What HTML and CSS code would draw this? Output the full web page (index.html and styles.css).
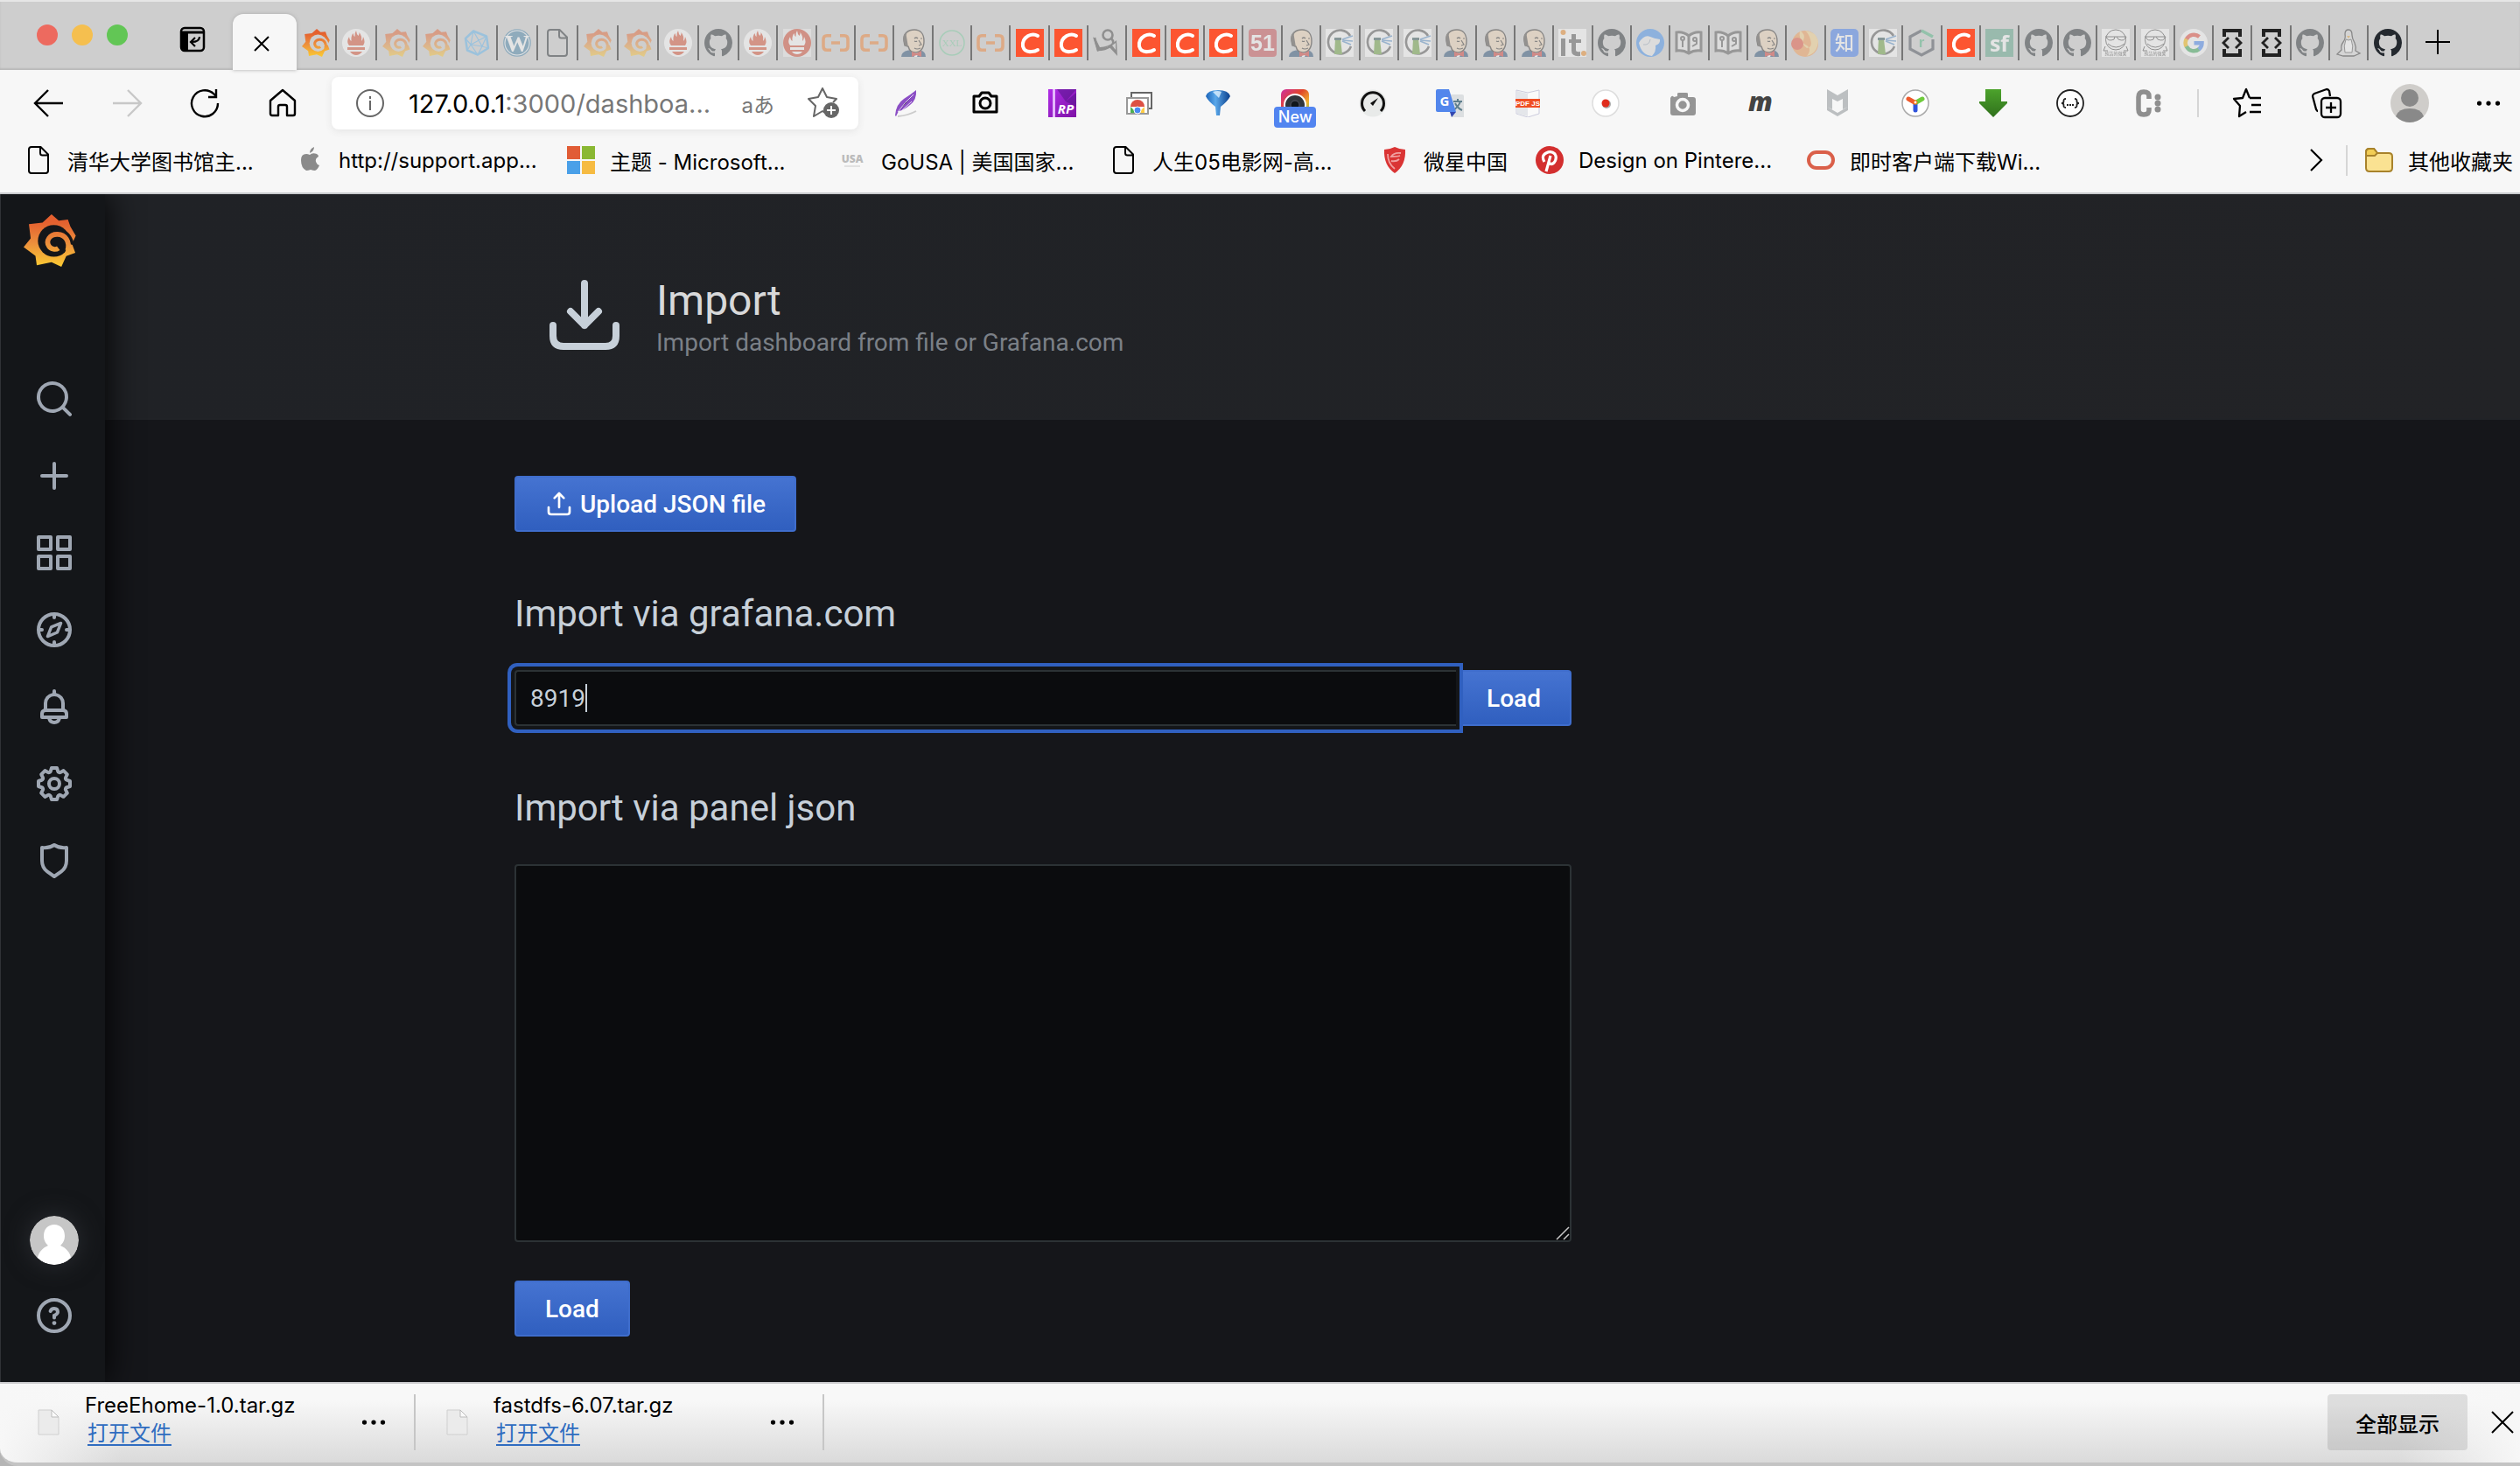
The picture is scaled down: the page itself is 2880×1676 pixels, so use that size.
FILE: index.html
```html
<!DOCTYPE html>
<html lang="zh-CN">
<head>
<meta charset="utf-8">
<title>Import - Grafana</title>
<link rel="stylesheet" href="styles.css">
</head>
<body>
<svg class="defs" aria-hidden="true">
<defs>
<linearGradient id="sun" x1="0" y1="0" x2="0" y2="1"><stop offset=".15" stop-color="#e4602f"/><stop offset=".55" stop-color="#ec8f3c"/><stop offset="1" stop-color="#fbcb33"/></linearGradient>
<linearGradient id="rp" x1="0" y1="0" x2="1" y2="1"><stop offset="0" stop-color="#b02ce8"/><stop offset="1" stop-color="#7d12a5"/></linearGradient>
<linearGradient id="cam" x1="0" y1="0" x2="1" y2="1"><stop offset="0" stop-color="#cf2fa0"/><stop offset=".4" stop-color="#e0452b"/><stop offset=".7" stop-color="#f0b030"/><stop offset="1" stop-color="#52c96b"/></linearGradient>
<linearGradient id="blue" x1="0" y1="0" x2="1" y2="0"><stop offset="0" stop-color="#1a63b8"/><stop offset=".4" stop-color="#5aa8ea"/><stop offset="1" stop-color="#0a3f8d"/></linearGradient>
<linearGradient id="green" x1="0" y1="0" x2="0" y2="1"><stop offset="0" stop-color="#4ca32c"/><stop offset="1" stop-color="#30701c"/></linearGradient>
<mask id="swirl"><rect width="32" height="32" fill="#fff"/><circle cx="18.4" cy="16.2" r="9.7" fill="#000"/><path d="M24 9C28 11 30 14 31 19L27 20Z" fill="#000"/><path d="M26.8 22C28.4 16.5 25.4 12.4 20.7 12.2C15.8 12 13.4 16.2 15.4 19.4C16.8 21.5 19.6 21.8 21.2 20.6" fill="none" stroke="#fff" stroke-width="3"/><path d="M27 18L32 19V24H25Z" fill="#fff"/><path d="M25 6Q29 9 30 12L32 15L31 6L27 3Z" fill="#fff"/></mask>
<symbol id="grafana" viewBox="0 0 32 32"><path mask="url(#swirl)" fill="url(#sun)" d="M17 0L21.4 3.8L27 3.2L28.5 7.5L31.8 13L29.5 18L31.5 23.5L26 25.5L23 32L17 29.2L8 31L7.2 25.3L0 20L4.3 14.7L3.2 6L11.5 5Z" stroke-linejoin="round"/></symbol>
<symbol id="prom" viewBox="0 0 32 32"><circle cx="16" cy="16" r="16" fill="#fff"/><path fill="#da4e31" d="M8 19C5 15 6.500 12 8 9Q8.500 13 10.500 14Q10 8 12.500 5Q13 8 14.500 9Q14 5 16 2Q16.500 6 18.500 8Q20 6 19.500 4Q23 8 22 14Q24 12 24 9Q27 15 24 19ZM6 21H26V24H6ZM9 26H23Q20 30 16 30Q12 30 9 26Z"/></symbol>
<symbol id="promsq" viewBox="0 0 32 32"><path fill="#eee" d="M0 0H32V32H0Z"/><circle cx="16" cy="16" r="16" fill="#d4472e"/><path fill="#fff" d="M8 19C5 15 6.500 12 8 9Q8.500 13 10.500 14Q10 8 12.500 5Q13 8 14.500 9Q14 5 16 2Q16.500 6 18.500 8Q20 6 19.500 4Q23 8 22 14Q24 12 24 9Q27 15 24 19ZM8 21H24V24H8ZM10 26H22Q20 29 16 29Q12 29 10 26Z"/></symbol>
<symbol id="poly" viewBox="0 0 32 32"><g fill="none" stroke="#5fb4ef" stroke-linejoin="round"><path stroke-width="2.500" d="M12 2.500L27 8.500L29 22L17 29.500L5 24.500L3 11Z"/><path stroke-width="1.200" d="M12 2.500L9 18L27 8.500M9 18L22 20L27 8.500M22 20L29 22M22 20L17 29.500L9 18L5 24.500M9 18L3 11M12 2.500L22 20"/></g></symbol>
<symbol id="wp" viewBox="0 0 32 32"><circle cx="16" cy="16" r="15.200" fill="#fff" stroke="#4381a8" stroke-width="1.300"/><circle cx="16" cy="16" r="13.500" fill="#4381a8"/><text x="16" y="26" font-family="Liberation Serif, serif" font-weight="700" font-size="28" text-anchor="middle" fill="#fff">W</text></symbol>
<symbol id="page" viewBox="0 0 32 32"><path fill="none" stroke="currentColor" stroke-width="2" stroke-linejoin="round" d="M8 1H18.500L27 9.500V28Q27 31 24 31H8Q5 31 5 28V4Q5 1 8 1ZM18 1.500V8Q18 10.500 20.500 10.500H26.500"/></symbol>
<symbol id="github" viewBox="0 0 16 16"><path fill="currentColor" d="M8 0C3.580 0 0 3.580 0 8c0 3.540 2.290 6.530 5.470 7.590.4.070.55-.17.55-.38 0-.19-.01-.82-.01-1.490-2.010.37-2.530-.49-2.690-.94-.09-.23-.48-.94-.82-1.130-.28-.15-.68-.52-.01-.53.63-.01 1.080.58 1.230.82.72 1.210 1.870.87 2.330.66.07-.52.28-.87.51-1.070-1.780-.2-3.640-.89-3.640-3.950 0-.87.31-1.590.82-2.150-.08-.2-.36-1.020.08-2.120 0 0 .67-.21 2.200.82.64-.18 1.320-.27 2-.27s1.360.09 2 .27c1.530-1.040 2.200-.82 2.200-.82.44 1.100.16 1.920.08 2.120.51.56.82 1.270.82 2.150 0 3.070-1.870 3.750-3.650 3.950.29.25.54.73.54 1.480 0 1.070-.01 1.930-.01 2.200 0 .21.15.46.55.38A8.010 8.010 0 0 0 16 8c0-4.420-3.580-8-8-8z"/></symbol>
<symbol id="ali" viewBox="0 0 32 32"><path fill="none" stroke="#f08030" stroke-width="3.600" d="M11 7.800H6Q2 7.800 2 12V20Q2 24.200 6 24.200H11M21 7.800H26Q30 7.800 30 12V20Q30 24.200 26 24.200H21M11 16H21"/></symbol>
<symbol id="butler" viewBox="0 0 32 32"><path fill="#234a73" d="M2 32Q2 26 10 24.500L24 24.500Q30 26 30 32Z"/><path fill="#fff" d="M13 24L17 32H20L23 25Z"/><path d="M5 14C4 5 10 1 17 1C24 1 28 6 28 14C28 22 24 27 18 27C14 27 11 24 10 20L6 19Z" fill="#f0d6b7" stroke="#33302e" stroke-width="1.400"/><path fill="#4c4845" d="M5 15Q2 6 10 2Q7 6 8 9L9 15L10 21Q6 20 5 15Z"/><path d="M17 11Q19 9 21 11M24 11L26 11M17 14Q19 15 20 14M22 13L25 18L22 19M17 22Q20 24 24 22" fill="none" stroke="#33302e" stroke-width="1.200"/><path fill="#d33833" d="M14 26L19.500 28L25 25V32L19.500 30L14 32Z"/></symbol>
<symbol id="xxl" viewBox="0 0 32 32"><circle cx="16" cy="16" r="14" fill="none" stroke="#7ccba0" stroke-width="1.600"/><text x="16" y="20" font-family="Liberation Serif, serif" font-size="11" text-anchor="middle" fill="#7ccba0">XXL</text></symbol>
<symbol id="csdn" viewBox="0 0 32 32"><path fill="#fc5531" d="M0 0H32V32H0Z"/><path fill="none" stroke="#fff" stroke-width="4" stroke-linecap="round" d="M25 8Q20 5 14 8Q7 12 8 20Q10 27 18 26Q22 26 25 24"/></symbol>
<symbol id="dancer" viewBox="0 0 32 32"><g fill="none" stroke="#444" stroke-width="2.600"><circle cx="17" cy="7" r="5.500"/><path d="M21 11Q26 16 20 20Q14 24 6 24L2 10"/></g><path fill="#444" d="M0 9L5 15L8 21Q20 20 27 13L28 31L18 20L5 26Z"/><path fill="#cecece" d="M22 19L26 16V24Z"/></symbol>
<symbol id="fifty" viewBox="0 0 32 32"><rect width="32" height="32" rx="4" fill="#c94b50"/><text x="16" y="25" font-family="Liberation Sans, sans-serif" font-weight="700" font-size="25" text-anchor="middle" fill="#fff">51</text></symbol>
<symbol id="light" viewBox="0 0 32 32"><path fill="#fff" d="M0 0H32V32H0Z"/><path fill="none" stroke="#555" stroke-width="2.600" d="M28 8A13.500 13.500 0 1 0 29 20"/><path fill="#6aa03c" d="M11 12H17L19 29H10Z"/><path fill="#355" d="M10 10H18V13H10Z"/><path stroke="#5b93cc" stroke-width="1.600" d="M19 12L31 8M19 13L31 14M19 14L29 18"/></symbol>
<symbol id="ithome" viewBox="0 0 32 32"><path fill="#fff" d="M0 0H32V32H0Z"/><path fill="#555" d="M3 11H8V31H3ZM15 6H20V12H26V16H20V24Q20 27 25 26V31Q15 32 15 25V16H12V12H15Z"/><circle cx="5.500" cy="4" r="3" fill="#f08a24"/><circle cx="29" cy="28" r="3" fill="#f08a24"/></symbol>
<symbol id="dog" viewBox="0 0 32 32"><circle cx="16" cy="16" r="16" fill="#3f8ff0"/><path fill="#eee" d="M3 16Q9 6 16 9Q20 11 27 12Q28 17 22 19Q23 26 18 31Q6 30 3 16Z"/><path fill="none" stroke="#9ab" d="M8 18Q15 19 16 12"/></symbol>
<symbol id="book" viewBox="0 0 32 32"><path fill="#eee" stroke="#555" stroke-width="3" d="M2 4Q10 3 16 8Q22 3 30 4V25Q22 24 16 28Q10 24 2 25ZM16 8V27"/><g fill="none" stroke="#555" stroke-width="2"><circle cx="9" cy="11" r="2"/><path d="M9 13V21"/><circle cx="23" cy="12" r="2"/><path d="M25 12V17L20 20"/></g></symbol>
<symbol id="flame" viewBox="0 0 32 32"><circle cx="16" cy="17" r="15" fill="#f79a4f"/><path fill="#fbd68a" d="M10 2Q17 6 14 13Q12 18 18 22Q25 21 22 12Q20 5 16 2Q28 3 31 14Q30 28 18 31Q25 22 16 18Q8 12 10 2Z"/><circle cx="7" cy="17" r="7" fill="#e94f37"/></symbol>
<symbol id="zhi" viewBox="0 0 32 32"><rect width="32" height="32" rx="5" fill="#3c78f0"/><text x="16" y="24" font-family="Noto Sans CJK SC, sans-serif" font-weight="500" font-size="22" text-anchor="middle" fill="#fff">知</text></symbol>
<symbol id="runoob" viewBox="0 0 32 32"><path fill="none" stroke="#444b55" stroke-width="3.200" d="M16 2L3 9V23L16 30L29 23V12"/><path stroke="#4cb481" stroke-width="3.500" d="M16 2L29 9"/><text x="16" y="21" font-family="Liberation Sans, sans-serif" font-weight="700" font-size="17" text-anchor="middle" fill="#4cb481">r</text></symbol>
<symbol id="sf" viewBox="0 0 32 32"><path fill="#5ba486" d="M0 0H32V32H0Z"/><text x="16" y="26" font-family="Open Sans, sans-serif" font-weight="700" font-size="25" text-anchor="middle" fill="#fff">sf</text></symbol>
<symbol id="frog" viewBox="0 0 32 32"><path fill="#fff" d="M0 0H32V32H0Z"/><g fill="none" stroke="#444"><circle cx="16" cy="12.500" r="11.500"/><path d="M4 9H28M5 9Q7 15 14 12L15 9M17 9L19 12Q26 15 28 9M7 17Q16 25 26 17M4 20L2 25H7M28 20L30 25H25"/></g><text x="16" y="30" font-family="Noto Sans CJK SC, sans-serif" font-size="5" text-anchor="middle" fill="#333">纯洁的微笑</text></symbol>
<symbol id="google" viewBox="0 0 32 32"><circle cx="16" cy="16" r="16" fill="#fff"/><g fill="none" stroke-width="4.500"><path stroke="#ea4335" d="M7.800 12A9.500 9.500 0 0 1 22.500 9"/><path stroke="#fbbc05" d="M7.800 20.500A9.500 9.500 0 0 1 7.800 11.500"/><path stroke="#34a853" d="M22.500 23A9.500 9.500 0 0 1 7.800 20"/><path stroke="#4285f4" d="M16.500 16.200H25.500Q25.500 20.500 22 23.500"/></g></symbol>
<symbol id="dev" viewBox="0 0 32 32"><path fill="none" stroke="#222" stroke-width="4" d="M7 9V2H25V9M7 23V30H25V23"/><path fill="none" stroke="#222" stroke-width="2.800" d="M12 10L6 16L12 22M20 10L26 16L20 22"/></symbol>
<symbol id="tux" viewBox="0 0 32 32"><path fill="#ddd" stroke="#333" stroke-width="1.300" d="M12 6Q12 1 16 1Q20 1 20 7Q20 11 23 16Q25 21 24 25L29 28L22 31H10L3 29L8 24Q7 19 10 15Q13 11 12 6Z"/><path fill="#fff" stroke="#555" d="M13 12Q16 14 19 12Q22 20 20 27H12Q10 20 13 12Z"/><path fill="#e5a43b" d="M14 8H18L16 11Z"/></symbol>
<symbol id="m-dots" viewBox="0 0 32 32"><g fill="currentColor"><circle cx="4" cy="16" r="3"/><circle cx="16" cy="16" r="3"/><circle cx="28" cy="16" r="3"/></g></symbol>
<symbol id="doc" viewBox="0 0 28 32"><path fill="#ebebeb" stroke="#cfcfcf" d="M2 2H17L25 10V30H2Z"/><path fill="#fafafa" stroke="#bbb" d="M17 2L25 10H17Z"/></symbol>
</defs>
</svg>

<header class="browser">
  <div class="strip">
    <div class="strip-start">
      <div class="lights"><i class="red"></i><i class="amber"></i><i class="green"></i></div>
      <button class="plain" aria-label="标签页操作"><svg class="i32" viewBox="0 0 32 32"><rect x="3" y="3" width="26" height="26" rx="4" fill="none" stroke="#000" stroke-width="2.500"/><path d="M3 8H29" stroke="#000" stroke-width="3"/><path d="M3 9H11V28H6Q3 28 3 25Z"/><path fill="none" stroke="#000" stroke-width="2.200" d="M24 13Q24 19 15 19M19 14L14 19L19 24"/></svg></button>
    </div>
    <button class="active-tab" aria-label="关闭标签页"><svg class="i20" viewBox="0 0 20 20"><path stroke="#000" stroke-width="2" d="M2 2L18 18M18 2L2 18"/></svg></button>
    <nav class="tabs">
      <button class="tab wide full"><svg><use href="#grafana"/></svg></button>
      <button class="tab wide"><svg><use href="#prom"/></svg></button>
      <button class="tab wide"><svg><use href="#grafana"/></svg></button>
      <button class="tab wide"><svg><use href="#grafana"/></svg></button>
      <button class="tab wide"><svg><use href="#poly"/></svg></button>
      <button class="tab wide"><svg><use href="#wp"/></svg></button>
      <button class="tab wide"><svg><use href="#page"/></svg></button>
      <button class="tab wide"><svg><use href="#grafana"/></svg></button>
      <button class="tab wide"><svg><use href="#grafana"/></svg></button>
      <button class="tab wide"><svg><use href="#prom"/></svg></button>
      <button class="tab wide"><svg><use href="#github"/></svg></button>
      <button class="tab"><svg><use href="#prom"/></svg></button>
      <button class="tab"><svg><use href="#promsq"/></svg></button>
      <button class="tab"><svg><use href="#ali"/></svg></button>
      <button class="tab"><svg><use href="#ali"/></svg></button>
      <button class="tab"><svg><use href="#butler"/></svg></button>
      <button class="tab"><svg><use href="#xxl"/></svg></button>
      <button class="tab"><svg><use href="#ali"/></svg></button>
      <button class="tab full"><svg><use href="#csdn"/></svg></button>
      <button class="tab full"><svg><use href="#csdn"/></svg></button>
      <button class="tab"><svg><use href="#dancer"/></svg></button>
      <button class="tab full"><svg><use href="#csdn"/></svg></button>
      <button class="tab full"><svg><use href="#csdn"/></svg></button>
      <button class="tab full"><svg><use href="#csdn"/></svg></button>
      <button class="tab"><svg><use href="#fifty"/></svg></button>
      <button class="tab"><svg><use href="#butler"/></svg></button>
      <button class="tab"><svg><use href="#light"/></svg></button>
      <button class="tab"><svg><use href="#light"/></svg></button>
      <button class="tab"><svg><use href="#light"/></svg></button>
      <button class="tab"><svg><use href="#butler"/></svg></button>
      <button class="tab"><svg><use href="#butler"/></svg></button>
      <button class="tab"><svg><use href="#butler"/></svg></button>
      <button class="tab"><svg><use href="#ithome"/></svg></button>
      <button class="tab"><svg><use href="#github"/></svg></button>
      <button class="tab"><svg><use href="#dog"/></svg></button>
      <button class="tab"><svg><use href="#book"/></svg></button>
      <button class="tab"><svg><use href="#book"/></svg></button>
      <button class="tab"><svg><use href="#butler"/></svg></button>
      <button class="tab"><svg><use href="#flame"/></svg></button>
      <button class="tab"><svg><use href="#zhi"/></svg></button>
      <button class="tab"><svg><use href="#light"/></svg></button>
      <button class="tab"><svg><use href="#runoob"/></svg></button>
      <button class="tab full"><svg><use href="#csdn"/></svg></button>
      <button class="tab"><svg><use href="#sf"/></svg></button>
      <button class="tab"><svg><use href="#github"/></svg></button>
      <button class="tab"><svg><use href="#github"/></svg></button>
      <button class="tab"><svg><use href="#frog"/></svg></button>
      <button class="tab"><svg><use href="#frog"/></svg></button>
      <button class="tab"><svg><use href="#google"/></svg></button>
      <button class="tab full"><svg><use href="#dev"/></svg></button>
      <button class="tab full"><svg><use href="#dev"/></svg></button>
      <button class="tab"><svg><use href="#github"/></svg></button>
      <button class="tab"><svg><use href="#tux"/></svg></button>
      <button class="tab full"><svg><use href="#github"/></svg></button>
    </nav>
    <button class="plain new-tab" aria-label="新建标签页"><svg class="i32" viewBox="0 0 32 32"><path stroke="#000" stroke-width="2" d="M16 2V30M2 16H30"/></svg></button>
  </div>

  <div class="toolbar">
    <div class="nav">
      <button class="plain" aria-label="后退"><svg class="i36" viewBox="0 0 36 36"><path fill="none" stroke="#000" stroke-width="2.400" d="M34 18H3M17 3L2 18L17 33"/></svg></button>
      <button class="plain" aria-label="前进"><svg class="i36" viewBox="0 0 36 36"><path fill="none" stroke="#c8c8c8" stroke-width="2.400" d="M2 18H33M19 3L34 18L19 33"/></svg></button>
      <button class="plain" aria-label="刷新"><svg class="i36" viewBox="0 0 36 36"><path fill="none" stroke="#000" stroke-width="2.400" d="M33 18A15 15 0 1 1 28.500 7.500L31 10M31 2V11H22"/></svg></button>
      <button class="plain" aria-label="主页"><svg class="i36" viewBox="0 0 36 36"><path fill="none" stroke="#000" stroke-width="2.400" stroke-linejoin="round" d="M4 15L18 3L32 15V30Q32 32 30 32H23V22Q23 20 21 20H15Q13 20 13 22V32H6Q4 32 4 30Z"/></svg></button>
    </div>
    <div class="address">
      <svg class="i32" viewBox="0 0 32 32"><circle cx="16" cy="16" r="15" fill="none" stroke="#666" stroke-width="2"/><path stroke="#666" stroke-width="2" d="M16 13V24M16 8V11"/></svg>
      <div class="url" role="textbox" aria-label="地址栏">127.0.0.1<span>:3000/dashboa...</span></div>
      <span class="lang">aあ</span>
      <button class="plain" aria-label="添加到收藏夹"><svg class="i36" viewBox="0 0 36 36"><path fill="none" stroke="#666" stroke-width="2" stroke-linejoin="round" d="M20 29L17 27L7 33L9 21L1 13L12 11L17 1L22 11L33 13L29 17"/><circle cx="27" cy="26" r="9" fill="#666"/><path stroke="#fff" stroke-width="2" d="M27 21V31M22 26H32"/></svg></button>
    </div>
    <div class="extensions">
      <button class="plain"><svg class="i32" viewBox="0 0 32 32"><path fill="#8b4ec5" d="M2 30Q3 17 12 11Q20 6 26 1Q27 12 19 18Q12 24 6 25L3 31Z"/><path stroke="#e5d5f5" d="M5 26Q13 15 23 6M10 24L21 14"/><path stroke="#ccc" stroke-width="2" fill="none" d="M5 31Q17 30 26 25"/></svg></button>
      <button class="plain"><svg class="i32" viewBox="0 0 32 32"><path fill="none" stroke="#000" stroke-width="3" stroke-linejoin="round" d="M3 8H9L12 4H20L23 8H29V26H3Z"/><circle cx="16" cy="16" r="6" fill="none" stroke="#000" stroke-width="3"/></svg></button>
      <button class="plain"><svg class="i32" viewBox="0 0 32 32"><path fill="url(#rp)" d="M0 0H32V32H0Z"/><path fill="#5a1690" opacity=".6" d="M10 0L20 14L32 4V20L20 14L32 0Z"/><path fill="#e4b8ff" d="M5 0H8V32H5Z"/><text x="20" y="28" font-family="Open Sans, sans-serif" font-weight="700" font-style="italic" font-size="15" text-anchor="middle" fill="#fff">RP</text></svg></button>
      <button class="plain"><svg class="i32" viewBox="0 0 32 32"><path fill="#fff" stroke="#666" stroke-width="2" d="M6 4H29V22H6Z"/><path fill="#fff" stroke="#999" stroke-width="2" d="M1 10H25V28H1Z"/><path fill="#dd5144" d="M5 20A8 8 0 0 1 21 20Z"/><path fill="#4caf50" d="M5 20V27H12Z"/><path fill="#ffcd46" d="M21 20V27H14Z"/><circle cx="13" cy="24" r="4" fill="#4a8af4" stroke="#fff"/></svg></button>
      <button class="plain"><svg class="i32" viewBox="0 0 32 32"><path fill="url(#blue)" d="M2 8Q4 1 16 1Q28 1 30 8Q27 14 19 20L18 30H14L13 20Q5 14 2 8Z"/><path fill="#dff1ff" opacity=".8" d="M10 3Q16 1 20 3L17 10Z"/></svg></button>
      <button class="plain badge-host"><svg class="i32" viewBox="0 0 32 32"><rect width="32" height="32" rx="6" fill="url(#cam)"/><circle cx="16" cy="18" r="13" fill="#fff"/><circle cx="16" cy="18" r="11" fill="#2f353b"/><circle cx="16" cy="18" r="5" fill="#10161c" stroke="#556"/></svg><span class="badge">New</span></button>
      <button class="plain"><svg class="i32" viewBox="0 0 32 32"><circle cx="16" cy="16" r="15.500" fill="#e8eae9"/><path fill="none" stroke="#111" stroke-width="3" d="M7 25A12.500 12.500 0 1 1 25 25"/><path fill="#111" d="M22 10L16 19L13 16Z"/></svg></button>
      <button class="plain"><svg class="i32" viewBox="0 0 32 32"><path fill="#dcdfe1" d="M12 6H30Q32 6 32 8V32H18Z"/><path fill="none" stroke="#5f7f8d" stroke-width="2" d="M20 14H30M25 11V14M28 14Q26 20 20 24M22 16Q25 22 30 24"/><path fill="#5286ec" d="M0 2Q0 0 2 0H15L23 26H2Q0 26 0 24Z"/><path fill="#3247b0" d="M16 26H23L18 32Z"/><text x="10" y="19" font-family="Open Sans, sans-serif" font-weight="700" font-size="15" text-anchor="middle" fill="#fff">G</text></svg></button>
      <button class="plain"><svg class="i32" viewBox="0 0 32 32"><path fill="#fafafa" stroke="#ccd" d="M3 1L16 4L29 1V28L16 32L3 28Z"/><path fill="#e4e6ea" d="M4 2L16 5V31L4 28Z"/><path fill="#f04e23" d="M2 11H30V21H2Z"/><text x="16" y="19" font-family="Liberation Sans, sans-serif" font-weight="700" font-size="8" text-anchor="middle" fill="#fff">PDF JS</text></svg></button>
      <button class="plain"><svg class="i32" viewBox="0 0 32 32"><circle cx="16" cy="16" r="15" fill="#fff" stroke="#ddd" stroke-width="1.500"/><circle cx="17" cy="17" r="5" fill="#aaa"/><circle cx="16" cy="16" r="4.500" fill="#e02c1c"/></svg></button>
      <button class="plain"><svg class="i32" viewBox="0 0 32 32"><path fill="#959595" d="M2 10Q4 6 6 9L10 8V5Q10 4 12 4H20Q22 4 22 5V9H28Q31 9 31 12V27Q31 30 28 30H5Q2 30 2 27Z"/><circle cx="16" cy="18" r="6.500" fill="none" stroke="#f7f7f7" stroke-width="3.500"/></svg></button>
      <button class="plain"><svg class="i32" viewBox="0 0 32 32"><text x="16" y="25" font-family="Open Sans, sans-serif" font-weight="800" font-style="italic" font-size="30" text-anchor="middle" fill="#444">m</text></svg></button>
      <button class="plain"><svg class="i32" viewBox="0 0 32 32"><path fill="#bcbfc1" d="M4 0L16 7L28 0V20L22 23V11L16 14L10 11V23L4 20ZM4 20L16 27L28 20V24L16 31L4 24Z"/></svg></button>
      <button class="plain"><svg class="i32" viewBox="0 0 32 32"><circle cx="16" cy="16" r="15" fill="#fff" stroke="#aaa" stroke-width="1.500"/><g stroke-width="5" stroke-linecap="round"><path stroke="#2f53dc" d="M16 16V24"/><path stroke="#ef5a2c" d="M15 15L8 11"/><path stroke="#6fcb3c" d="M17 15L24 11"/></g><circle cx="16" cy="15" r="2" fill="#fff" stroke="#f60"/></svg></button>
      <button class="plain"><svg class="i32" viewBox="0 0 32 32"><path fill="url(#green)" d="M7 0H25V14H32V16L16 32L0 16V14H7Z"/></svg></button>
      <button class="plain"><svg class="i32" viewBox="0 0 32 32"><circle cx="16" cy="16" r="15" fill="#fff" stroke="#222" stroke-width="1.800"/><path fill="none" stroke="#222" stroke-width="1.800" d="M11 11Q8 11 8.500 14Q8.500 16 6 16Q8.500 16 8.500 18Q8 21 11 21M21 11Q24 11 23.500 14Q23.500 16 26 16Q23.500 16 23.500 18Q24 21 21 21"/><path d="M12 17H14V19H12ZM15 17H17V19H15ZM18 17H20V19H18Z" fill="#222"/></svg></button>
      <button class="plain"><svg class="i32" viewBox="0 0 32 32"><path fill="none" stroke="#8f8f8f" stroke-width="5.500" d="M17 11V8Q17 3 11 3Q5 3 5 9V23Q5 29 11 29Q17 29 17 24V21"/><g fill="#8f8f8f"><circle cx="27" cy="9" r="3.500"/><circle cx="27" cy="16" r="3.500"/><circle cx="27" cy="23" r="3.500"/></g></svg></button>
    </div>
    <div class="profile">
      <button class="plain" aria-label="收藏夹"><svg class="i36" viewBox="0 0 36 36"><path fill="none" stroke="#000" stroke-width="2.300" stroke-linejoin="round" d="M20 12L16 2L12 12L2 13L9 21L8 33L16 28M20 12H33M22 20H33M20 28H33"/></svg></button>
      <button class="plain" aria-label="集锦"><svg class="i36" viewBox="0 0 36 36"><path fill="none" stroke="#000" stroke-width="2.300" stroke-linejoin="round" d="M8 27Q7 27 6 25L2 10Q2 8 4 7L18 2Q20 2 21 4L22 10"/><rect x="12" y="12" width="22" height="22" rx="4" fill="none" stroke="#000" stroke-width="2.300"/><path stroke="#000" stroke-width="2.300" d="M23 17V29M17 23H29"/></svg></button>
      <button class="plain" aria-label="用户"><svg class="i44" viewBox="0 0 44 44"><circle cx="22" cy="22" r="22" fill="#cfcdca"/><circle cx="22" cy="16" r="10" fill="#898989"/><path fill="#898989" d="M6 37Q9 28 22 28Q35 28 38 37Q31 44 22 44Q13 44 6 37Z"/></svg></button>
      <button class="plain" aria-label="更多"><svg class="i28"><use href="#m-dots"/></svg></button>
    </div>
  </div>

  <nav class="bookmarks">
    <a href="#"><svg><use href="#page"/></svg>清华大学图书馆主...</a>
    <a href="#"><svg viewBox="0 0 32 32"><path fill="#8a8a8a" d="M21 1Q21 6 16 8Q16 3 21 1ZM16 10Q19 7 24 9Q26 10 26 12Q22 14 23 18Q24 21 27 22Q25 27 22 28Q20 28 17 27Q14 28 12 28Q6 25 6 16Q6 9 12 9Q14 9 16 10Z"/></svg>http://support.app...</a>
    <a href="#"><svg viewBox="0 0 32 32"><path fill="#e15c35" d="M0 0H15V15H0Z"/><path fill="#8ab833" d="M17 0H32V15H17Z"/><path fill="#4aa0e8" d="M0 17H15V32H0Z"/><path fill="#f6bb42" d="M17 17H32V32H17Z"/></svg>主题 - Microsoft...</a>
    <a href="#"><svg viewBox="0 0 32 32"><text x="16" y="19" font-family="Open Sans, sans-serif" font-weight="800" font-size="12" text-anchor="middle" fill="#bbb">USA</text><path stroke="#ccc" d="M7 23H25"/></svg>GoUSA | 美国国家...</a>
    <a href="#"><svg><use href="#page"/></svg>人生05电影网-高...</a>
    <a class="short" href="#"><svg viewBox="0 0 32 32"><path fill="#da3434" d="M4 4Q10 4 16 1Q22 4 28 4Q29 22 16 31Q3 22 4 4Z"/><path fill="none" stroke="#f0a0a0" stroke-width="1.800" d="M8 9Q8 20 16 26M23 8Q15 7 12 12Q19 12 22 11M12 17Q18 18 21 15"/></svg>微星中国</a>
    <a href="#"><svg viewBox="0 0 32 32"><circle cx="16" cy="16" r="16" fill="#d32f2f"/><path fill="none" stroke="#fff" stroke-width="3.200" d="M10 18Q6 11 12 8Q18 5 22 9Q25 14 21 19Q18 22 15 19M17 11L12 29"/></svg>Design on Pintere...</a>
    <a href="#"><svg viewBox="0 0 32 32"><rect x="2" y="7" width="28" height="18" rx="9" fill="none" stroke="#da5f49" stroke-width="4"/></svg>即时客户端下载Wi...</a>
    <div class="more">
      <button class="plain" aria-label="更多书签"><svg class="i28" viewBox="0 0 28 28"><path fill="none" stroke="#000" stroke-width="2.200" d="M8 2L20 14L8 26"/></svg></button>
      <a class="short folder" href="#"><svg viewBox="0 0 32 32"><path fill="#fae292" stroke="#a8822b" stroke-width="2" d="M1 7Q1 3 5 3H10L14 8H27Q31 8 31 12V25Q31 29 27 29H5Q1 29 1 25Z"/><path fill="#f2cd55" stroke="#a8822b" stroke-width="2" d="M1 11V7Q1 3 5 3H10L14 8L11 11Z"/></svg>其他收藏夹</a>
    </div>
  </nav>
</header>

<div class="app">
  <aside class="sidebar">
    <a class="logo" href="#" aria-label="Grafana"><svg><use href="#grafana"/></svg></a>
    <nav class="side-nav">
      <a href="#" aria-label="Search"><svg viewBox="0 0 24 24"><path fill="currentColor" d="M21.710 20.290L18 16.610A9 9 0 1 0 16.610 18l3.680 3.680a1 1 0 0 0 1.420 0A1 1 0 0 0 21.710 20.290ZM11 18a7 7 0 1 1 7-7A7 7 0 0 1 11 18Z"/></svg></a>
      <a href="#" aria-label="Create"><svg viewBox="0 0 24 24"><path stroke="currentColor" stroke-width="2" stroke-linecap="round" d="M12 5V19M5 12H19"/></svg></a>
      <a href="#" aria-label="Dashboards"><svg viewBox="0 0 24 24"><path fill="none" stroke="currentColor" stroke-width="2" stroke-linejoin="round" d="M3 3H10V10H3ZM14 3H21V10H14ZM3 14H10V21H3ZM14 14H21V21H14Z"/></svg></a>
      <a href="#" aria-label="Explore"><svg viewBox="0 0 24 24"><g fill="none" stroke="currentColor" stroke-width="2" stroke-linejoin="round"><circle cx="12" cy="12" r="9"/><path stroke-width="1.700" d="M15.800 8.200L13.700 13.500L8.200 15.800L10.300 10.400Z"/><path stroke-linecap="round" d="M12 3.500V5M12 19V20.500M3.500 12H5M19 12H20.500"/></g></svg></a>
      <a href="#" aria-label="Alerting"><svg viewBox="0 0 24 24"><path fill="currentColor" d="M18 13.180V10a6 6 0 0 0-5-5.910V3a1 1 0 0 0-2 0V4.090A6 6 0 0 0 6 10v3.180A3 3 0 0 0 4 16v2a1 1 0 0 0 1 1H8.140a4 4 0 0 0 7.720 0H19a1 1 0 0 0 1-1V16A3 3 0 0 0 18 13.180ZM8 10a4 4 0 0 1 8 0v3H8Zm4 10a2 2 0 0 1-1.720-1h3.440A2 2 0 0 1 12 20Zm6-3H6V16a1 1 0 0 1 1-1H17a1 1 0 0 1 1 1Z"/></svg></a>
      <a href="#" aria-label="Configuration"><svg viewBox="0 0 24 24"><path fill="currentColor" d="M21.320 9.550l-1.890-.63.890-1.780A1 1 0 0 0 20.130 6L18 3.870a1 1 0 0 0-1.150-.19l-1.780.89-.63-1.890A1 1 0 0 0 13.500 2h-3a1 1 0 0 0-.95.68L8.920 4.570 7.140 3.680A1 1 0 0 0 6 3.870L3.870 6a1 1 0 0 0-.19 1.150l.89 1.780-1.890.63A1 1 0 0 0 2 10.500v3a1 1 0 0 0 .68.95l1.890.63-.89 1.780A1 1 0 0 0 3.870 18L6 20.130a1 1 0 0 0 1.150.19l1.780-.89.63 1.890a1 1 0 0 0 .95.68h3a1 1 0 0 0 .95-.68l.63-1.890 1.780.89A1 1 0 0 0 18 20.130L20.130 18a1 1 0 0 0 .19-1.150l-.89-1.780 1.890-.63A1 1 0 0 0 22 13.500v-3A1 1 0 0 0 21.320 9.550ZM20 12.780l-1.200.4A2 2 0 0 0 17.640 16l.57 1.140-1.100 1.100L16 17.640a2 2 0 0 0-2.790 1.160l-.4 1.200H11.220l-.4-1.200A2 2 0 0 0 8 17.640l-1.140.57-1.100-1.100L6.360 16A2 2 0 0 0 5.200 13.180L4 12.780V11.220l1.200-.4A2 2 0 0 0 6.360 8L5.790 6.890l1.100-1.100L8 6.360A2 2 0 0 0 10.820 5.200l.4-1.200h1.560l.4 1.200A2 2 0 0 0 16 6.360l1.140-.57 1.100 1.100L17.640 8a2 2 0 0 0 1.160 2.790l1.200.4ZM12 8a4 4 0 1 0 4 4A4 4 0 0 0 12 8Zm0 6a2 2 0 1 1 2-2A2 2 0 0 1 12 14Z"/></svg></a>
      <a href="#" aria-label="Server admin"><svg viewBox="0 0 24 24"><path fill="none" stroke="currentColor" stroke-width="2" stroke-linejoin="round" d="M5 4.500Q9 5 12 3Q15 5 19 4.500V12Q19 16 16 18.200L12 21L8 18.200Q5 16 5 12Z"/></svg></a>
    </nav>
    <div class="side-end">
      <a href="#" class="avatar" aria-label="Profile"><svg viewBox="0 0 56 56"><circle cx="28" cy="28" r="28" fill="#c6c6c6"/><path fill="#fff" d="M28 10C35 10 40 15 40 23C40 29 37 32 35 34C42 37 46 42 47 48Q39 56 28 56Q17 56 9 48C10 42 14 37 21 34C19 32 16 29 16 23C16 15 21 10 28 10Z"/></svg></a>
      <a href="#" aria-label="Help"><svg viewBox="0 0 24 24"><circle cx="12" cy="12" r="9" fill="none" stroke="currentColor" stroke-width="2"/><path fill="none" stroke="currentColor" stroke-width="2" stroke-linecap="round" d="M9.800 9.500Q10.300 8 12 8Q14 8 14 10Q14 11 12 12V13.200"/><circle cx="12" cy="16.300" r="1.200" fill="currentColor"/></svg></a>
    </div>
  </aside>
  <main class="main">
    <header class="page-header">
      <div class="container page-title">
        <svg viewBox="0 0 24 24"><path fill="none" stroke="currentColor" stroke-width="2" stroke-linecap="round" stroke-linejoin="round" d="M12 3V15M8 11L12 15L16 11M3 15V18Q3 21 6 21H18Q21 21 21 18V15"/></svg>
        <div>
          <h1>Import</h1>
          <p>Import dashboard from file or Grafana.com</p>
        </div>
      </div>
    </header>
    <div class="container">
      <form class="import-form">
        <button type="button" class="btn upload"><svg viewBox="0 0 24 24"><path fill="none" stroke="currentColor" stroke-width="2" stroke-linecap="round" stroke-linejoin="round" d="M12 15V3M8 7L12 3L16 7M3 15V19Q3 21 5 21H19Q21 21 21 19V15"/></svg>Upload JSON file</button>
        <label class="heading" for="gcom">Import via grafana.com</label>
        <div class="gcom-row">
          <div class="field"><input id="gcom" type="text" value="8919"><span class="caret"></span></div>
          <button type="button" class="btn joined">Load</button>
        </div>
        <label class="heading" for="json">Import via panel json</label>
        <div class="area"><textarea id="json"></textarea><svg class="grip" viewBox="0 0 16 16"><path stroke="#c8c8c8" stroke-width="1.500" d="M1 15L15 1M9 15L15 9"/></svg></div>
        <button type="button" class="btn">Load</button>
      </form>
    </div>
  </main>
</div>

<footer class="downloads">
  <div class="download"><svg class="doc"><use href="#doc"/></svg><div class="file"><span>FreeEhome-1.0.tar.gz</span><a href="#">打开文件</a></div><button class="plain" aria-label="更多"><svg class="i28"><use href="#m-dots"/></svg></button></div>
  <div class="download"><svg class="doc"><use href="#doc"/></svg><div class="file"><span>fastdfs-6.07.tar.gz</span><a href="#">打开文件</a></div><button class="plain" aria-label="更多"><svg class="i28"><use href="#m-dots"/></svg></button></div>
  <button class="show-all">全部显示</button>
  <button class="plain close" aria-label="关闭"><svg class="i28" viewBox="0 0 28 28"><path stroke="#000" stroke-width="2" d="M2 2L26 26M26 2L2 26"/></svg></button>
</footer>
</body>
</html>
```
FILE: styles.css
```css
* { box-sizing: border-box; }

body {
  margin: 0;
  min-height: 100vh;
  display: flex;
  flex-direction: column;
  font-family: Inter, "Noto Sans CJK SC", sans-serif;
  font-size: 24px;
  color: #000;
  background: #b5b5b5;
}

svg { display: block; flex: none; }
.defs { position: absolute; width: 0; height: 0; }
.i20 { width: 20px; height: 20px; }
.i28 { width: 28px; height: 28px; }
.i32 { width: 32px; height: 32px; }
.i36 { width: 36px; height: 36px; }
.i44 { width: 44px; height: 44px; }

button { font: inherit; color: inherit; border: 0; cursor: pointer; }
.plain {
  display: flex;
  align-items: center;
  justify-content: center;
  padding: 0;
  background: none;
}

/* Browser chrome */
.browser { background: #f7f7f7; border-bottom: 2px solid #c9cbce; }

.strip {
  display: flex;
  height: 80px;
  background: #cecece;
  border-top: 2px solid #e6e6e6;
  box-shadow: inset 0 -2px 2px #b9b9b9;
}
.strip-start {
  flex: none;
  width: 266px;
  display: flex;
  align-items: center;
  justify-content: space-between;
  padding: 8px 30px 0 42px;
}
.lights { display: flex; gap: 16px; padding-bottom: 10px; }
.lights i { width: 24px; height: 24px; border-radius: 50%; }
.red { background: #ed6a5f; }
.amber { background: #f5bf4f; }
.green { background: #62c655; }
.active-tab {
  flex: none;
  width: 73px;
  margin-top: 14px;
  padding: 4px 8px 0 0;
  display: flex;
  align-items: center;
  justify-content: center;
  background: #f7f7f7;
  border-radius: 12px 12px 0 0;
  box-shadow: 0 0 4px #aaa;
}
.tabs { flex: 1; display: flex; align-items: center; padding-top: 16px; min-width: 0; }
.tab {
  flex: 1 1 0;
  min-width: 0;
  height: 40px;
  padding: 0;
  display: flex;
  align-items: center;
  justify-content: center;
  background: none;
  border-right: 2px solid #777;
  color: #24292f;
}
.tab.wide { flex: 0 0 46px; }
.tab svg { width: 32px; height: 32px; opacity: .45; }
.tab.full svg { opacity: 1; }
.new-tab { flex: none; justify-content: flex-end; width: 128px; padding: 14px 78px 0 0; }

.toolbar { display: flex; align-items: center; padding: 8px 0 0 12px; }
.nav { flex: none; width: 355px; display: grid; grid-template-columns: repeat(4, 1fr); }
.address {
  flex: none;
  width: 602px;
  height: 60px;
  margin-left: 12px;
  padding: 0 22px 0 28px;
  display: flex;
  align-items: center;
  background: #fff;
  border-radius: 8px;
  box-shadow: 0 2px 8px #e4e4e4;
}
.url { flex: 1; padding-left: 28px; font-size: 29px; white-space: nowrap; }
.url span { color: #777; }
.lang { padding-right: 38px; color: #777; font-size: 24px; }
.extensions {
  flex: 1;
  margin-left: 12px;
  display: grid;
  grid-template-columns: repeat(17, 1fr);
}
.badge-host { position: relative; }
.badge {
  position: absolute;
  top: 20px;
  left: 50%;
  width: 48px;
  margin-left: -24px;
  height: 24px;
  line-height: 24px;
  border-radius: 4px;
  background: #5285f0;
  color: #fff;
  font-size: 18px;
  font-weight: 500;
}
.profile {
  flex: none;
  width: 369px;
  height: 32px;
  margin-left: 12px;
  display: flex;
  justify-content: space-between;
  align-items: center;
  border-left: 2px solid #d6d6d6;
  padding: 0 22px 0 38px;
}

.bookmarks { display: flex; align-items: center; gap: 32px; height: 72px; padding: 0 8px 2px 28px; }
.bookmarks a {
  flex: none;
  width: 278px;
  display: flex;
  align-items: center;
  gap: 17px;
  color: #000;
  text-decoration: none;
  white-space: nowrap;
}
.bookmarks a svg { width: 32px; height: 32px; }
.bookmarks a.short { width: auto; }
.more { margin-left: auto; display: flex; align-items: center; gap: 20px; }
.bookmarks .folder { border-left: 2px solid #d6d6d6; padding-left: 20px; }

/* Grafana */
.app { flex: 1; display: flex; overflow: hidden; font-family: Roboto, sans-serif; color: #c7d0d9; }
.sidebar {
  flex: none;
  width: 120px;
  display: flex;
  flex-direction: column;
  align-items: center;
  padding: 22px 0 52px 3px;
  background: #141619;
  border-left: 1px solid #303236;
  box-shadow: 0 0 40px #000;
  position: relative;
  color: #9fa7b3;
}
.sidebar a { display: block; color: inherit; }
.sidebar a svg { width: 48px; height: 48px; }
.sidebar .logo { padding-right: 10px; }
.sidebar .logo svg { width: 60px; height: 62px; }
.side-nav { display: flex; flex-direction: column; gap: 40px; margin-top: 126px; }
.side-end { margin-top: auto; display: flex; flex-direction: column; align-items: center; gap: 34px; }
.sidebar .avatar svg { width: 56px; height: 56px; border-radius: 50%; box-shadow: 0 0 28px #2c2e33; }

.main { flex: 1; min-width: 0; background: #15161a; }
.container { max-width: 1824px; margin: 0 auto; }
.page-header {
  padding: 90px 0 70px;
  background: linear-gradient(90deg, #202226, #222326);
  border-bottom: 2px solid #212327;
}
.page-title { display: flex; padding-left: 32px; gap: 34px; }
.page-title svg { width: 96px; height: 96px; }
.page-title h1 { margin: 0; font-size: 48px; line-height: 64px; font-weight: 400; color: #d8d9da; }
.page-title p { margin: 0; font-size: 28px; line-height: 32px; color: #7b8087; }

.import-form {
  max-width: 1208px;
  padding: 64px 0 52px;
  display: flex;
  flex-direction: column;
  align-items: flex-start;
}
.btn {
  height: 64px;
  padding: 0 33px;
  display: flex;
  align-items: center;
  gap: 8px;
  color: #fff;
  font-size: 28px;
  font-weight: 500;
  background: linear-gradient(#4573d1, #305fbf);
  border: 2px solid #3f6dcc;
  border-radius: 4px;
}
.btn svg { width: 32px; height: 32px; }
.joined { border-radius: 0 4px 4px 0; }
.heading { font-size: 42px; line-height: 52px; margin: 68px 0 38px; }
.gcom-row { display: flex; align-self: stretch; }
.field { flex: 1; position: relative; }
.field input, .area textarea {
  display: block;
  width: 100%;
  font: inherit;
  font-size: 28px;
  color: #c7d0d9;
  background: #0b0c0e;
  border: 2px solid #2c3235;
  border-radius: 4px;
  outline: 0;
}
.field input {
  height: 64px;
  padding: 0 16px;
  border-right: 0;
  border-radius: 4px 0 0 4px;
  box-shadow: 0 0 0 4px #141619, 0 0 0 8px #3060c0;
}
.caret { position: absolute; left: 81px; top: 16px; width: 2px; height: 32px; background: #c7d0d9; }
.area { position: relative; align-self: stretch; margin-bottom: 44px; }
.area textarea { height: 432px; padding: 16px; resize: none; }
.grip { position: absolute; right: 2px; bottom: 2px; width: 16px; height: 16px; }

/* Download shelf */
.downloads {
  display: flex;
  align-items: center;
  height: 96px;
  padding: 0 6px 2px 8px;
  border-top: 2px solid #cdcdd0;
  border-bottom: 4px solid #c4c4c4;
  background:
    linear-gradient(90deg, #f7f7f7, #f7f7f700 140px),
    linear-gradient(270deg, #f7f7f7, #f7f7f700 140px),
    linear-gradient(#f8f8f8 20%, #dadada);
  border-radius: 0 0 0 20px;
}
.download {
  display: flex;
  align-items: center;
  width: 467px;
  height: 64px;
  padding: 0 32px;
  border-right: 2px solid #c6c6c6;
}
.download .doc { width: 32px; height: 32px; }
.file { flex: 1; padding: 0 0 6px 25px; display: flex; flex-direction: column; align-items: flex-start; }
.file span, .file a { line-height: 32px; white-space: nowrap; }
.file a { color: #2f6cc0; text-underline-offset: 4px; margin-left: 3px; }
.show-all {
  margin-left: auto;
  width: 160px;
  height: 64px;
  padding: 0;
  background: #0000001a;
  border-radius: 4px;
  font-weight: 500;
}
.close { margin-left: 26px; }
```
